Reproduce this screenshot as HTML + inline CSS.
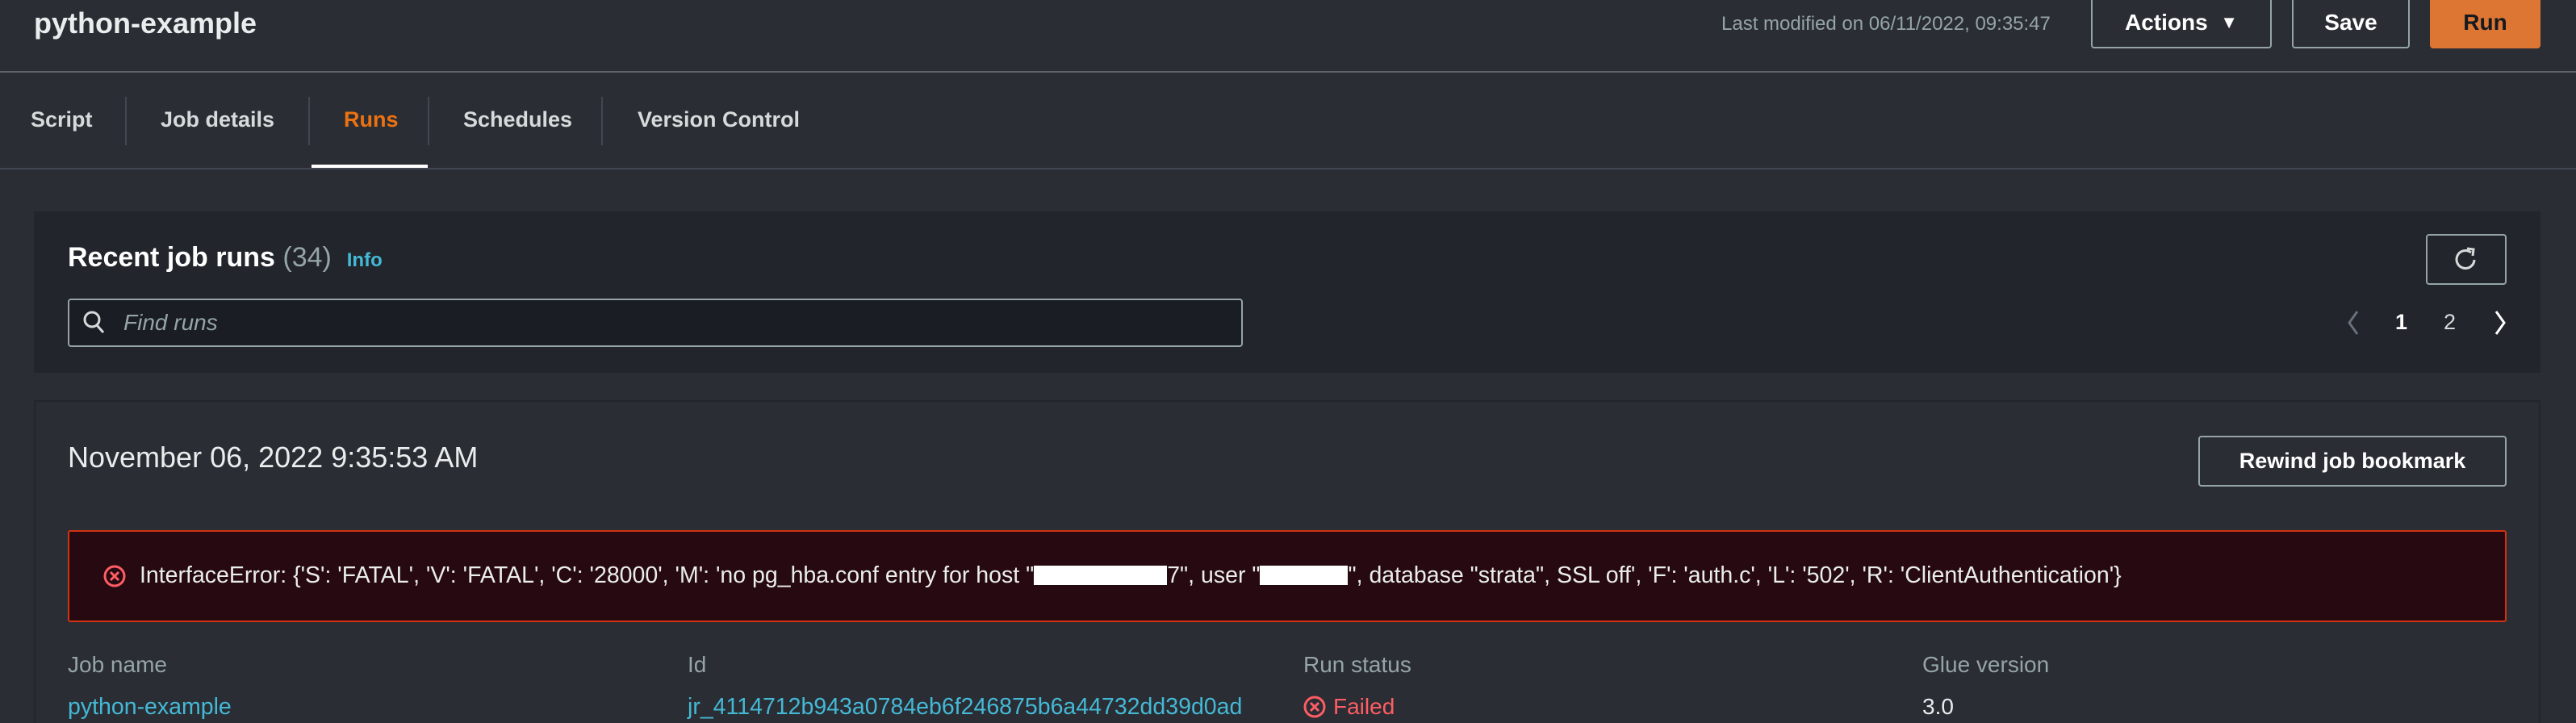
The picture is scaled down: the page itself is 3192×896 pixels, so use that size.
<!DOCTYPE html>
<html><head><meta charset="utf-8"><style>
*{margin:0;padding:0;box-sizing:border-box}
body{width:3192px;height:894px;background:#2a2d33;font-family:"Liberation Sans",sans-serif;color:#d5dbdb;position:relative;overflow:hidden}
.a{position:absolute;white-space:nowrap}
.btn{position:absolute;border:2px solid #95a5a6;border-radius:4px;color:#fff;font-weight:bold;font-size:28px;display:flex;align-items:center;justify-content:center}
.sep{position:absolute;top:120px;width:2px;height:60px;background:#414750}
.lbl{color:#95a5a6;font-size:28px}
.lnk{color:#44b9d6;font-size:28.5px}
.wb{display:inline-block;background:#fff;height:24px;vertical-align:-3px}
</style></head><body>
<div class="a" style="left:42px;top:8px;font-size:36px;font-weight:bold;color:#eaeded">python-example</div>
<div class="a" style="left:2133px;top:16px;font-size:24px;color:#95a5a6">Last modified on 06/11/2022, 09:35:47</div>
<div class="btn" style="left:2591px;top:-4px;width:224px;height:64px">Actions&nbsp;&nbsp;<span style="font-size:22px">▼</span></div>
<div class="btn" style="left:2840px;top:-4px;width:146px;height:64px">Save</div>
<div class="btn" style="left:3011px;top:-4px;width:137px;height:64px;background:#dd7633;border-color:#dd7633;color:#16191f">Run</div>
<div class="a" style="left:0;top:88px;width:3192px;height:2px;background:#5f6368"></div>
<div class="a" style="left:38px;top:133px;font-size:27px;font-weight:bold;color:#d5dbdb">Script</div>
<div class="sep" style="left:155px"></div>
<div class="a" style="left:199px;top:133px;font-size:27px;font-weight:bold;color:#d5dbdb">Job details</div>
<div class="sep" style="left:382px"></div>
<div class="a" style="left:426px;top:133px;font-size:27px;font-weight:bold;color:#ec7211">Runs</div>
<div class="sep" style="left:530px"></div>
<div class="a" style="left:574px;top:133px;font-size:27px;font-weight:bold;color:#d5dbdb">Schedules</div>
<div class="sep" style="left:745px"></div>
<div class="a" style="left:790px;top:133px;font-size:27px;font-weight:bold;color:#d5dbdb">Version Control</div>
<div class="a" style="left:386px;top:204px;width:144px;height:4px;background:#fff"></div>
<div class="a" style="left:0;top:208px;width:3192px;height:2px;background:#414750"></div>
<div class="a" style="left:42px;top:262px;width:3106px;height:200px;background:#22252b"></div>
<div class="a" style="left:84px;top:300px;font-size:34px;font-weight:bold;color:#fff">Recent job runs <span style="font-weight:normal;color:#95a5a6">(34)</span>&nbsp;&nbsp;<span style="font-size:24px;color:#44b9d6">Info</span></div>
<div class="a" style="left:84px;top:370px;width:1456px;height:60px;border:2px solid #95a5a6;border-radius:4px;background:#1a1d24"></div>
<svg class="a" style="left:102px;top:384px" width="30" height="32" viewBox="0 0 30 32"><circle cx="12" cy="12" r="9" fill="none" stroke="#d5dbdb" stroke-width="3"/><line x1="18" y1="19" x2="26" y2="28" stroke="#d5dbdb" stroke-width="3"/></svg>
<div class="a" style="left:153px;top:384px;font-size:28px;font-style:italic;color:#95a5a6">Find runs</div>
<div class="a" style="left:3006px;top:290px;width:100px;height:63px;border:2px solid #95a5a6;border-radius:4px"></div>
<svg class="a" style="left:3040px;top:305px" width="32" height="34" viewBox="0 0 32 34"><path d="M22 8 A11 11 0 1 0 26 17" fill="none" stroke="#d5dbdb" stroke-width="3"/><path d="M17 3 L25 4 L24 12" fill="none" stroke="#d5dbdb" stroke-width="3"/></svg>
<svg class="a" style="left:2906px;top:383px" width="20" height="34"><path d="M15 3 L5 17 L15 31" fill="none" stroke="#687078" stroke-width="3"/></svg>
<div class="a" style="left:2968px;top:384px;font-size:27px;font-weight:bold;color:#fff">1</div>
<div class="a" style="left:3028px;top:384px;font-size:27px;color:#d5dbdb">2</div>
<svg class="a" style="left:3088px;top:383px" width="20" height="34"><path d="M5 3 L15 17 L5 31" fill="none" stroke="#fff" stroke-width="3"/></svg>
<div class="a" style="left:42px;top:496px;width:3106px;height:400px;border-left:2px solid #22252b;border-right:2px solid #22252b;border-top:2px solid #22252b"></div>
<div class="a" style="left:84px;top:546px;font-size:36px;color:#eaeded">November 06, 2022 9:35:53 AM</div>
<div class="btn" style="left:2724px;top:540px;width:382px;height:63px;font-size:27px">Rewind job bookmark</div>
<div class="a" style="left:84px;top:657px;width:3022px;height:114px;background:#270a11;border:2px solid #d13212;border-radius:3px"></div>
<svg class="a" style="left:127px;top:699px" width="30" height="30" viewBox="0 0 30 30"><circle cx="15" cy="15" r="12" fill="none" stroke="#ff5d64" stroke-width="3"/><path d="M10 10 L20 20 M20 10 L10 20" stroke="#ff5d64" stroke-width="3"/></svg>
<div class="a" style="left:173px;top:697px;font-size:28.5px;color:#eaeded">InterfaceError: {'S': 'FATAL', 'V': 'FATAL', 'C': '28000', 'M': 'no pg_hba.conf entry for host "<span class="wb" style="width:165px"></span>7", user "<span class="wb" style="width:109px"></span>", database "strata", SSL off', 'F': 'auth.c', 'L': '502', 'R': 'ClientAuthentication'}</div>
<div class="a lbl" style="left:84px;top:808px">Job name</div>
<div class="a lbl" style="left:852px;top:808px">Id</div>
<div class="a lbl" style="left:1615px;top:808px">Run status</div>
<div class="a lbl" style="left:2382px;top:808px">Glue version</div>
<div class="a lnk" style="left:84px;top:860px">python-example</div>
<div class="a lnk" style="left:852px;top:860px">jr_4114712b943a0784eb6f246875b6a44732dd39d0ad</div>
<svg class="a" style="left:1614px;top:861px" width="30" height="30" viewBox="0 0 30 30"><circle cx="15" cy="15" r="12" fill="none" stroke="#ff5d64" stroke-width="3"/><path d="M10 10 L20 20 M20 10 L10 20" stroke="#ff5d64" stroke-width="3"/></svg>
<div class="a" style="left:1652px;top:860px;font-size:28px;color:#ff5d64">Failed</div>
<div class="a" style="left:2382px;top:860px;font-size:28px;color:#eaeded">3.0</div>
</body></html>
